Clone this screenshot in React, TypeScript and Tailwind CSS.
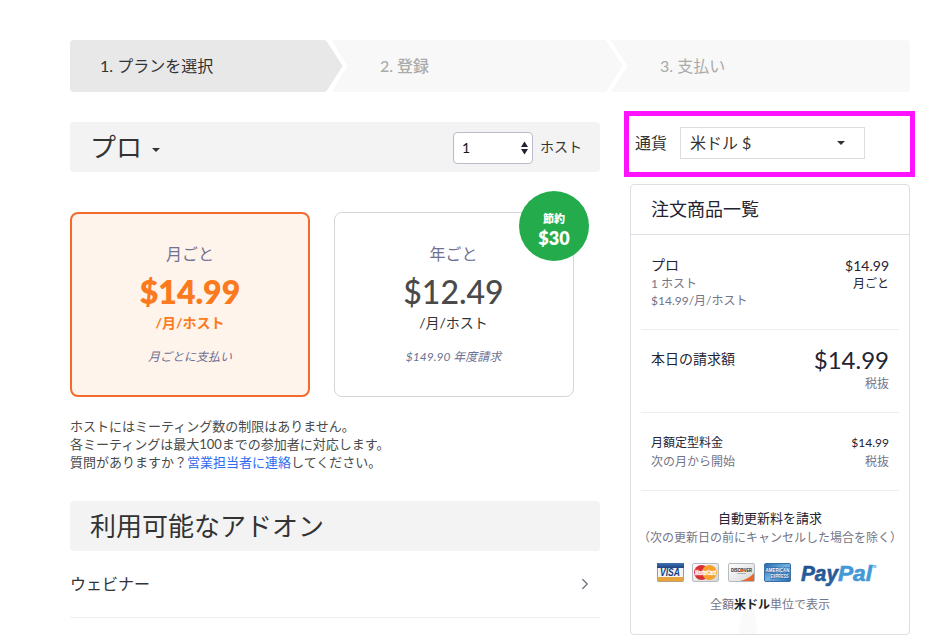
import { useState } from 'react';
import { ChevronRight } from 'lucide-react';

function Caret() {
    return (
        <svg width="8" height="4" viewBox="0 0 8 4" className="fill-current">
            <path d="M0 0h8L4 4z" />
        </svg>
    );
}

function Steps() {
    return (
        <div className="relative flex h-[52px] items-center overflow-hidden rounded bg-[#f8f8f8] text-base leading-6">
            <svg width="840" height="52" viewBox="0 0 840 52" className="absolute inset-0">
                <path d="M250 0H262L276 26L262 52H250z" fill="#fff" />
                <path d="M0 0H253Q257 0 260 4L272 23Q274 26 272 29L260 48Q257 52 253 52H0z" fill="#e8e8e8" />
                <path d="M257 -2L275 26L257 54M537 -2L555 26L537 54" fill="none" stroke="#fff" strokeWidth="4" />
            </svg>
            <div className="relative w-[280px] pl-[30px] text-[#333]">1. プランを選択</div>
            <div className="relative w-[280px] pl-[30px] font-medium text-[#aaa]">2. 登録</div>
            <div className="relative w-[280px] pl-[30px] text-[#aaa]">3. 支払い</div>
        </div>
    );
}

function PlanCard({ title, price, note, active, onClick }: { title: string; price: string; note: string; active: boolean; onClick: () => void }) {
    return (
        <button
            onClick={onClick}
            className={`flex h-[185px] w-[240px] flex-col items-center rounded-lg text-center ${active ? 'border-2 border-[#f26b2b] bg-[#fff4ec] pt-[28px]' : 'border border-[#d6d6d6] bg-white pr-px pt-[29px]'}`}
        >
            <span className="text-base leading-6 text-[#6e7191]">{title}</span>
            <span className={`mt-[6px] text-[32px] leading-[40px] ${active ? 'font-extrabold text-[#fb7a20]' : 'font-medium text-[#4a4a4a]'}`}>{price}</span>
            <span className={`mt-px text-sm leading-5 ${active ? 'font-bold text-[#fb7a20]' : 'text-[#333]'}`}>/月/ホスト</span>
            <span className="mt-[15px] text-xs italic leading-[18px] text-[#6e7191]">{note}</span>
        </button>
    );
}

function CardLogos() {
    return (
        <svg width="222" height="28" viewBox="0 0 222 28" fontFamily="Liberation Sans, sans-serif" fontWeight="bold">
            <defs>
                <linearGradient id="visa" x2="0" y2="1"><stop stopColor="#4273b4" /><stop offset="1" stopColor="#1e4382" /></linearGradient>
                <linearGradient id="silver" x2="1" y2="1"><stop stopColor="#fff" /><stop offset="1" stopColor="#d3d6d9" /></linearGradient>
                <linearGradient id="amex" x2="1" y2="1"><stop stopColor="#2167ad" /><stop offset=".5" stopColor="#73b2e0" /><stop offset="1" stopColor="#2167ad" /></linearGradient>
                <linearGradient id="pay" x2="0" y2="1"><stop stopColor="#224b89" /><stop offset="1" stopColor="#2a68a8" /></linearGradient>
            </defs>
            <rect x=".5" y="3.500" width="26" height="18" rx="1.500" fill="#f3f4f6" stroke="#8f9dae" />
            <path d="M0 3h27v5H0z" fill="url(#visa)" />
            <path d="M0 17h27v3.500q0 1-1 1H1q-1 0-1-1z" fill="#e7a33c" />
            <text x="3" y="16" fontSize="10" fontStyle="italic" fill="#203f7d" textLength="20" lengthAdjust="spacingAndGlyphs">VISA</text>
            <g transform="translate(35 0)">
                <rect x=".5" y="3.500" width="26" height="18" rx="1.500" fill="url(#silver)" stroke="#b7bbc0" />
                <circle cx="9.500" cy="12.500" r="7.500" fill="#d93035" />
                <circle cx="17.500" cy="12.500" r="7.500" fill="#f5a12c" />
                <text x="3" y="15" fontSize="7" fontStyle="italic" fill="#fff" stroke="#fff" strokeWidth=".3" textLength="21" lengthAdjust="spacingAndGlyphs">MasterCard</text>
            </g>
            <g transform="translate(71 0)">
                <rect x=".5" y="3.500" width="26" height="18" rx="1.500" fill="url(#silver)" stroke="#b7bbc0" />
                <path d="M26 13v8H12Q21 19 26 13z" fill="#e8662b" />
                <text x="3" y="12" fontSize="4.500" fill="#222" textLength="21" lengthAdjust="spacingAndGlyphs">DISCOVER</text>
                <circle cx="13.700" cy="10.400" r="1.700" fill="#e8662b" />
                <path d="M9 13.500h9" stroke="#999" strokeWidth=".7" />
            </g>
            <g transform="translate(107 0)">
                <rect x=".5" y="3.500" width="26" height="18" rx="1.500" fill="url(#amex)" stroke="#3b70a5" />
                <g stroke="#205a9c" strokeWidth="1.100" paintOrder="stroke" fill="#fff">
                    <text x="1.500" y="12" fontSize="5.500" textLength="24" lengthAdjust="spacingAndGlyphs">AMERICAN</text>
                    <text x="6.500" y="18" fontSize="5.500" textLength="18" lengthAdjust="spacingAndGlyphs">EXPRESS</text>
                </g>
            </g>
            <g fontStyle="italic" fontSize="21.500" strokeWidth=".6">
                <text x="144" y="20.500" fill="url(#pay)" stroke="#25548f" textLength="37" lengthAdjust="spacingAndGlyphs">Pay</text>
                <text x="181" y="20.500" fill="#4199d8" stroke="#4199d8" textLength="34" lengthAdjust="spacingAndGlyphs">Pal</text>
            </g>
            <text x="215" y="8" fontSize="3" fill="#4199d8">TM</text>
        </svg>
    );
}

export default function App() {
    const [plan, setPlan] = useState('monthly');

    return (
        <div lang="ja" className="h-[641px] w-[950px] overflow-hidden whitespace-nowrap bg-white px-[70px] pt-10 font-['Lato','Noto_Sans_CJK_JP',sans-serif] text-[#333]">
            <div className="w-[840px]">
                <Steps />
                <div className="flex justify-between">
                    <main className="mt-[30px] w-[530px]">
                        <div className="flex h-[50px] items-center rounded bg-[#f3f3f3] pr-[18px]">
                            <button className="flex flex-1 items-center pl-5 text-[26px] leading-[50px]">
                                <span>プロ</span>
                                <span className="ml-[10px] mt-[5px]"><Caret /></span>
                            </button>
                            <div className="mr-[7px] mt-[2px] flex h-8 w-20 items-center justify-between rounded border border-[#babacc] bg-white pl-2 pr-1 text-sm text-[#131619]">
                                <span>1</span>
                                <svg width="7" height="14" viewBox="0 0 7 14" className="fill-[#232333]">
                                    <path d="M0 6L3.500 .5L7 6zM0 8L3.500 13.500L7 8z" />
                                </svg>
                            </div>
                            <span className="text-sm">ホスト</span>
                        </div>

                        <div className="relative mt-10 flex gap-6">
                            <PlanCard title="月ごと" price="$14.99" note="月ごとに支払い" active={plan === 'monthly'} onClick={() => setPlan('monthly')} />
                            <PlanCard title="年ごと" price="$12.49" note="$149.90 年度請求" active={plan === 'yearly'} onClick={() => setPlan('yearly')} />
                            <div className="absolute left-[449px] top-[-21px] flex size-[70px] flex-col items-center rounded-full bg-[#24ac4c] pt-[19px] font-extrabold text-white">
                                <span className="text-[11px] leading-[17px]">節約</span>
                                <span className="text-lg leading-[22px]">$30</span>
                            </div>
                        </div>

                        <p className="mt-5 text-[13px] leading-[18px] text-[#4a4a4a]">
                            ホストにはミーティング数の制限はありません。<br />
                            各ミーティングは最大100までの参加者に対応します。<br />
                            質問がありますか？<a href="#" className="text-[#2d6bf0]">営業担当者に連絡</a>してください。
                        </p>

                        <h2 className="mt-[30px] h-[50px] rounded bg-[#f3f3f3] pl-5 text-[26px] leading-[50px]">利用可能なアドオン</h2>
                        <div className="flex h-[67px] items-center justify-between border-b border-[#eee] pr-[6px] text-base">
                            <span>ウェビナー</span>
                            <ChevronRight className="size-[18px] text-[#747487]" strokeWidth={1.8} />
                        </div>
                    </main>

                    <aside className="mt-[19px] w-[286px]">
                        <div className="flex h-[66px] w-[291px] items-center border-[5px] border-[#ff12ff] pb-[2px] pl-[6px] text-base">
                            <span>通貨</span>
                            <button className="ml-[13px] flex h-8 w-[185px] items-center justify-between border border-[#ddd] pl-[9px] pr-[19px]">
                                <span>米ドル $</span>
                                <Caret />
                            </button>
                        </div>

                        <section className="relative ml-[6px] mt-[7px] h-[451px] w-[280px] rounded border border-[#dedee4] text-[#232333]">
                            <svg width="20" height="50" viewBox="0 0 20 50" className="absolute bottom-0 left-[107px] fill-[#fafafa]">
                                <path d="M0 50L12 0L20 50z" />
                            </svg>
                            <h3 className="h-[50px] border-b border-[#dedee4] pl-5 text-lg leading-[48px]">注文商品一覧</h3>
                            <div className="relative px-[10px]">
                                <div className="flex h-[95px] justify-between border-b border-[#eee] px-[10px] pt-5 leading-[18px]">
                                    <div className="text-xs text-[#747487]">
                                        <p className="text-sm leading-[19px] text-[#232333]">プロ</p>
                                        <p className="pt-[2px]">1 ホスト</p>
                                        <p className="leading-[17px]">$14.99/月/ホスト</p>
                                    </div>
                                    <div className="pt-px text-right text-xs">
                                        <p className="text-sm leading-[19px]">$14.99</p>
                                        <p className="pt-px">月ごと</p>
                                    </div>
                                </div>
                                <div className="flex h-[83px] justify-between border-b border-[#eee] px-[10px] text-sm">
                                    <p className="pt-[19px] leading-5">本日の請求額</p>
                                    <div className="pt-[15px] text-right">
                                        <p className="text-2xl leading-[30px]">$14.99</p>
                                        <p className="text-xs leading-[18px] text-[#747487]">税抜</p>
                                    </div>
                                </div>
                                <div className="flex h-[78px] justify-between border-b border-[#eee] px-[10px] pt-5 text-xs leading-[19px]">
                                    <div>
                                        <p>月額定型料金</p>
                                        <p className="text-[#747487]">次の月から開始</p>
                                    </div>
                                    <div className="text-right">
                                        <p>$14.99</p>
                                        <p className="text-[#747487]">税抜</p>
                                    </div>
                                </div>
                                <div className="flex flex-col items-center pt-[18px] text-xs leading-[19px] text-[#747487]">
                                    <p className="text-[13px] text-[#232333]">自動更新料を請求</p>
                                    <p>（次の更新日の前にキャンセルした場合を除く）</p>
                                    <div className="mt-[13px] pr-1"><CardLogos /></div>
                                    <p className="mt-[7px]">全額<b className="text-[#232323]">米ドル</b>単位で表示</p>
                                </div>
                            </div>
                        </section>
                    </aside>
                </div>
            </div>
        </div>
    );
}
